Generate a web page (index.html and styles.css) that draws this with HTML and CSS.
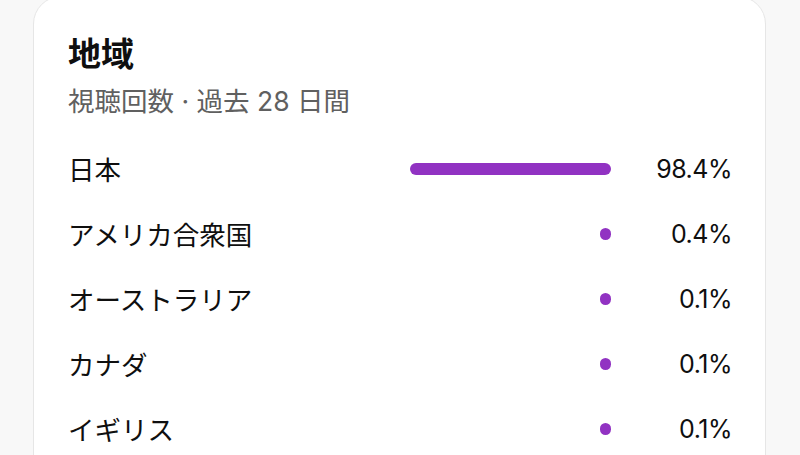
FILE: index.html
```html
<!DOCTYPE html>
<html lang="ja">
<head>
  <meta charset="UTF-8">
  <meta name="viewport" content="width=device-width, initial-scale=1.0">
  <title>地域</title>
  <link rel="stylesheet" href="styles.css">
</head>
<body>
  <div class="card">
    <h1>地域</h1>
    <p class="sub">視聴回数 · 過去 28 日間</p>

    <div class="rows">
      <div class="row">
        <span class="name">日本</span>
        <div class="track"><div class="bar" style="width:98.4%"></div></div>
        <span class="pct">98.4%</span>
      </div>
      <div class="row">
        <span class="name">アメリカ合衆国</span>
        <div class="track"><div class="bar" style="width:0.4%"></div></div>
        <span class="pct">0.4%</span>
      </div>
      <div class="row">
        <span class="name">オーストラリア</span>
        <div class="track"><div class="bar" style="width:0.1%"></div></div>
        <span class="pct">0.1%</span>
      </div>
      <div class="row">
        <span class="name">カナダ</span>
        <div class="track"><div class="bar" style="width:0.1%"></div></div>
        <span class="pct">0.1%</span>
      </div>
      <div class="row">
        <span class="name">イギリス</span>
        <div class="track"><div class="bar" style="width:0.1%"></div></div>
        <span class="pct">0.1%</span>
      </div>
    </div>
  </div>
</body>
</html>
```

FILE: styles.css
```css
body {
  margin: 0;
  background: #f8f8f8;
  color: #0f0f0f;
  font-family: Inter, "Noto Sans CJK JP", sans-serif;
  height: 455px;
  overflow: hidden;
}
.card {
  margin: -4px 34px 0 33px;
  background: #fff;
  border: 1px solid #e6e6e6;
  border-radius: 28px;
  padding: 37px 33px 40px 34px;
}
h1 {
  margin: 0;
  font-size: 33px;
  font-weight: 700;
  line-height: 40px;
}
.sub {
  margin: 10px 0 0;
  font-size: 26.5px;
  color: #606060;
  line-height: 34px;
}
.rows {
  margin-top: 18px;
}
.row {
  display: flex;
  align-items: center;
  height: 65px;
}
.name {
  flex: 1;
  font-size: 26.5px;
}
.track {
  width: 204px;
  display: flex;
  justify-content: flex-end;
}
.bar {
  min-width: 11px;
  height: 12px;
  border-radius: 6px;
  background: #9132c2;
}
.pct {
  width: 121px;
  text-align: right;
  font-size: 25px;
  letter-spacing: -0.5px;
}
```
